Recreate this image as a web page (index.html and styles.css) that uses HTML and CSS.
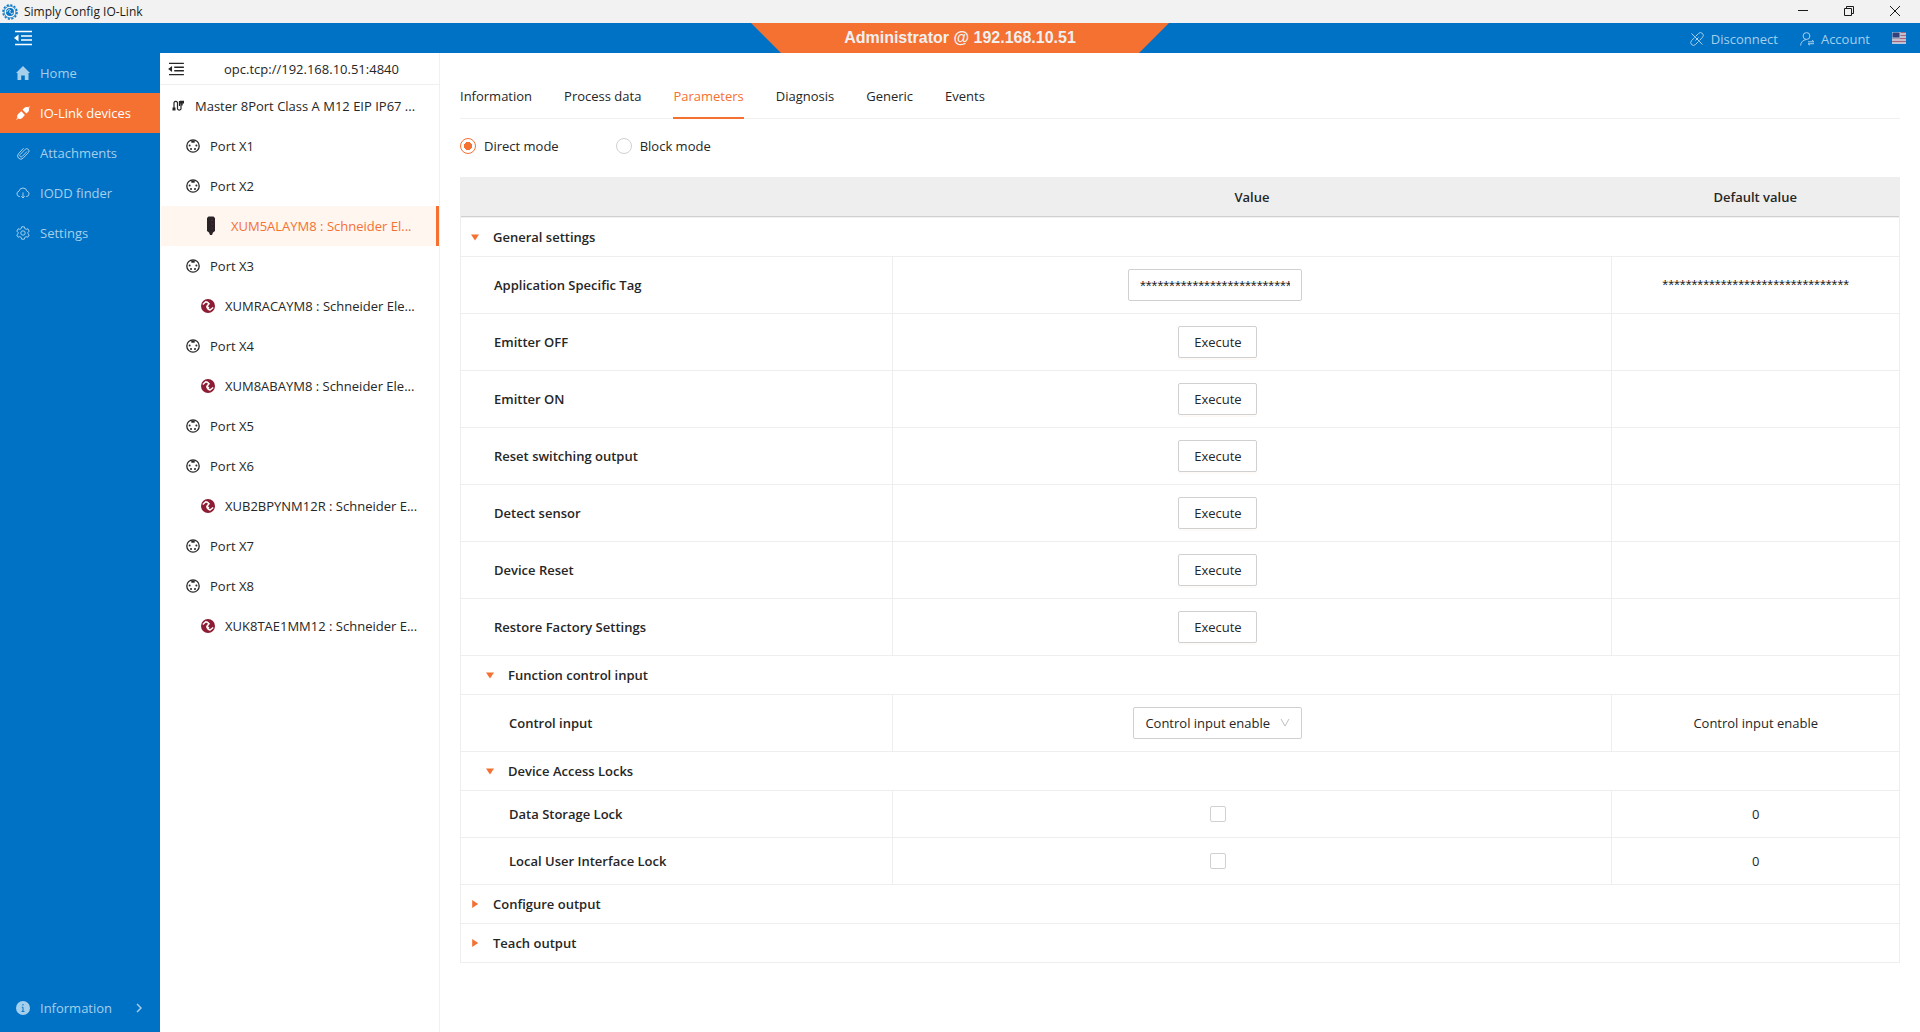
FILE: index.html
```html
<!DOCTYPE html>
<html lang="en">
<head>
<meta charset="UTF-8">
<meta name="viewport" content="width=device-width, initial-scale=1.0">
<title>Simply Config IO-Link</title>
<link rel="stylesheet" href="styles.css">
</head>
<body>

<!-- shared icons -->
<svg class="sprite" aria-hidden="true">
  <symbol id="fold" viewBox="0 0 18 16">
    <path d="M1 1.500h17M7 6h11M7 10h11M1 14.500h17" stroke="currentColor" stroke-width="1.500" fill="none"/>
    <path d="M0 8l4.500-3.500v7z" fill="currentColor"/>
  </symbol>
  <symbol id="port" viewBox="0 0 14 14">
    <circle cx="7" cy="7" r="6.200" fill="none" stroke="currentColor" stroke-width="1.300"/>
    <path d="M5.300 1.500h3.400v2.200H5.300z" fill="currentColor"/>
    <g fill="currentColor"><circle cx="3.600" cy="6.500" r="1"/><circle cx="10.400" cy="6.500" r="1"/><circle cx="5" cy="10" r="1"/><circle cx="9" cy="10" r="1"/></g>
  </symbol>
  <symbol id="iolink" viewBox="0 0 14 14">
    <circle cx="7" cy="7" r="7" fill="#8c1d32"/>
    <path d="M1.800 5.500L4.800 2.800Q6.500 2.800 8 4.800L6 7.200 8 9.200" fill="none" stroke="#fff" stroke-width="1.500"/>
    <path d="M5.800 7.500Q6.500 10.500 9 11L12.200 8.500" fill="none" stroke="#fff" stroke-width="1.500"/>
  </symbol>
</svg>

<div class="titlebar">
  <svg class="app-icon" viewBox="0 0 16 16">
    <circle cx="8" cy="8" r="7" fill="none" stroke="#0a76c4" stroke-width="1.600" stroke-dasharray="2.200 1.466"/>
    <circle cx="8" cy="8" r="5.900" fill="none" stroke="#0a76c4" stroke-width=".8"/>
    <circle cx="8" cy="8" r="4" fill="#0a76c4"/>
    <path d="M5 8c0-2 2-3 3.500-1.500L7.500 8l1.500 1.500C10 10.500 11 9.500 11 8.500" fill="none" stroke="#fff" stroke-width=".9"/>
  </svg>
  <span class="app-title">Simply Config IO-Link</span>
  <div class="window-buttons">
    <button aria-label="Minimize"><svg viewBox="0 0 10 10"><path d="M0 4.500h10"/></svg></button>
    <button aria-label="Restore"><svg viewBox="0 0 10 10"><path d="M.5 2.500h7v7h-7zM2.500 2V.5h7v7H8"/></svg></button>
    <button aria-label="Close"><svg viewBox="0 0 10 10"><path d="M0 0l10 10M10 0L0 10"/></svg></button>
  </div>
</div>

<header class="topbar">
  <button class="fold-button" aria-label="Collapse menu"><svg><use href="#fold"/></svg></button>
  <div class="banner">Administrator @ 192.168.10.51</div>
  <div class="user-links">
    <a href="#">
      <svg viewBox="0 0 14 14"><path d="M5.500 4.500l3-3a2.600 2.600 0 0 1 4 3.800L9.500 8.500M8.500 9.500l-3 3a2.600 2.600 0 0 1-4-3.800L4.500 5.500M1.500 1.500l11 11M5.500 8.500l3-3"/></svg>
      Disconnect
    </a>
    <a href="#">
      <svg viewBox="0 0 14 14"><circle cx="6.500" cy="4" r="3.400"/><path d="M.6 13.500c.2-3.400 2.500-5.600 5.900-6M8 9.800h6l-2-1.600M14 11.700H8l2 1.600"/></svg>
      Account
    </a>
    <button class="flag" aria-label="Language">
      <svg viewBox="0 0 14 12">
        <path fill="#c9bccb" d="M0 0h14v12H0z"/>
        <path d="M0 .5h14M0 3.500h14M0 6.500h14M0 9.500h14" stroke="#a4657a"/>
        <path fill="#35407a" d="M0 0h8v6H0z"/>
      </svg>
    </button>
  </div>
</header>

<div class="layout">
  <nav class="sidebar">
    <a href="#"><svg viewBox="0 0 14 14"><path class="solid" d="M7 0l7 7h-1.500v7H8.800V9.500H5.200V14H1.500V7H0z"/></svg>Home</a>
    <a href="#" class="active"><svg viewBox="0 0 14 14"><path class="solid" d="M6.500 3.800l1.700-1.700c1.200-1.200 2.800-1.200 3.900-.6L13.300.3l.6.600-1.200 1.200c.6 1.100.5 2.700-.6 3.800L10.300 7.600zM5.300 5.300l3.600 3.600-2.700 3c-1.200 1.200-2.900 1.200-4 .6L.8 13.800l-.6-.6 1.300-1.300c-.6-1.200-.5-2.800.6-3.900z"/></svg>IO-Link devices</a>
    <a href="#"><svg viewBox="0 0 14 14"><path d="M11 5.500l-4.800 5a1.400 1.400 0 0 1-2-2l5-5.200a2.300 2.300 0 0 1 3.200 3.300l-5.200 5.500a3.200 3.200 0 0 1-4.700-4.400L7.500 2.300"/></svg>Attachments</a>
    <a href="#"><svg viewBox="0 0 14 14"><path d="M4 10.500H3.300a2.700 2.700 0 0 1-.3-5.300 4.100 4.100 0 0 1 8 0 2.700 2.700 0 0 1-.3 5.300H10M7 6.500v5.500M5.300 10.300L7 12l1.700-1.700"/></svg>IODD finder</a>
    <a href="#"><svg viewBox="0 0 14 14"><path d="M5.700.8h2.600l.5 1.800 1.300.7 1.800-.5 1.300 2.300L11.900 6.400v1.300l1.300 1.200-1.300 2.300-1.800-.5-1.300.7-.5 1.800H5.700l-.5-1.800-1.300-.7-1.800.5L.8 8.900l1.300-1.200V6.400L.8 5.100l1.300-2.300 1.800.5 1.300-.7z"/><circle cx="7" cy="7" r="2.200"/></svg>Settings</a>
    <a href="#" class="info"><svg viewBox="0 0 14 14"><circle class="solid" cx="7" cy="7" r="7"/><path class="cut" d="M7 3v1.500M5.800 6.200H7v4M5.500 10.400h3"/></svg>Information<svg class="arrow" viewBox="0 0 6 10"><path d="M1 1l4 4-4 4"/></svg></a>
  </nav>

  <aside class="tree">
    <div class="tree-header">
      <button aria-label="Collapse tree"><svg><use href="#fold"/></svg></button>
      <span>opc.tcp://192.168.10.51:4840</span>
    </div>
    <ul>
      <li><a href="#" class="master"><svg viewBox="0 0 12 12"><path d="M2 8V2.500a2 2 0 0 1 3.500 0V9a2 2 0 0 0 3.500 0V3M7.500 1v5" fill="none" stroke="currentColor" stroke-width="1.200"/><path d="M.5 7.500h3v3h-3zM8 .8h4v2.800H8zM9.200 3h1.500v2.500H9.200z" fill="currentColor"/></svg>Master 8Port Class A M12 EIP IP67 ...</a></li>
      <li><a href="#" class="port"><svg><use href="#port"/></svg>Port X1</a></li>
      <li><a href="#" class="port"><svg><use href="#port"/></svg>Port X2</a></li>
      <li><a href="#" class="device selected"><svg viewBox="0 0 10 20"><path d="M1 2l1.500-1.500h5L9 2v13l-2 1.500L6 19H4l-1-2.500L1 15z" fill="#2a2428"/><path d="M5.500 4.500h1M5.500 8h1M5.500 12h1" stroke="#9c2030"/></svg>XUM5ALAYM8 : Schneider El...</a></li>
      <li><a href="#" class="port"><svg><use href="#port"/></svg>Port X3</a></li>
      <li><a href="#" class="device"><svg><use href="#iolink"/></svg>XUMRACAYM8 : Schneider Ele...</a></li>
      <li><a href="#" class="port"><svg><use href="#port"/></svg>Port X4</a></li>
      <li><a href="#" class="device"><svg><use href="#iolink"/></svg>XUM8ABAYM8 : Schneider Ele...</a></li>
      <li><a href="#" class="port"><svg><use href="#port"/></svg>Port X5</a></li>
      <li><a href="#" class="port"><svg><use href="#port"/></svg>Port X6</a></li>
      <li><a href="#" class="device"><svg><use href="#iolink"/></svg>XUB2BPYNM12R : Schneider E...</a></li>
      <li><a href="#" class="port"><svg><use href="#port"/></svg>Port X7</a></li>
      <li><a href="#" class="port"><svg><use href="#port"/></svg>Port X8</a></li>
      <li><a href="#" class="device"><svg><use href="#iolink"/></svg>XUK8TAE1MM12 : Schneider E...</a></li>
    </ul>
  </aside>

  <main class="content">
    <nav class="tabs">
      <a href="#">Information</a>
      <a href="#">Process data</a>
      <a href="#" class="active">Parameters</a>
      <a href="#">Diagnosis</a>
      <a href="#">Generic</a>
      <a href="#">Events</a>
    </nav>

    <div class="modes">
      <label><input type="radio" name="mode" checked>Direct mode</label>
      <label><input type="radio" name="mode">Block mode</label>
    </div>

    <table class="params">
      <colgroup><col class="col-name"><col class="col-value"><col class="col-default"></colgroup>
      <thead>
        <tr><th></th><th>Value</th><th>Default value</th></tr>
      </thead>
      <tbody>
        <tr class="group"><td colspan="3"><button class="open">General settings</button></td></tr>
        <tr><td><label for="tag">Application Specific Tag</label></td><td><input type="text" id="tag" value="********************************"></td><td class="stars">********************************</td></tr>
        <tr><td>Emitter OFF</td><td><button>Execute</button></td><td></td></tr>
        <tr><td>Emitter ON</td><td><button>Execute</button></td><td></td></tr>
        <tr><td>Reset switching output</td><td><button>Execute</button></td><td></td></tr>
        <tr><td>Detect sensor</td><td><button>Execute</button></td><td></td></tr>
        <tr><td>Device Reset</td><td><button>Execute</button></td><td></td></tr>
        <tr><td>Restore Factory Settings</td><td><button>Execute</button></td><td></td></tr>
        <tr class="group nested"><td colspan="3"><button class="open">Function control input</button></td></tr>
        <tr class="nested"><td><label for="control">Control input</label></td><td>
          <span class="select">
            <select id="control"><option>Control input enable</option></select>
            <svg viewBox="0 0 10 10"><path d="M1 1l4 7 4-7"/></svg>
          </span>
        </td><td>Control input enable</td></tr>
        <tr class="group nested"><td colspan="3"><button class="open">Device Access Locks</button></td></tr>
        <tr class="nested lock"><td><label for="storage">Data Storage Lock</label></td><td><input type="checkbox" id="storage"></td><td>0</td></tr>
        <tr class="nested lock"><td><label for="local">Local User Interface Lock</label></td><td><input type="checkbox" id="local"></td><td>0</td></tr>
        <tr class="group"><td colspan="3"><button>Configure output</button></td></tr>
        <tr class="group"><td colspan="3"><button>Teach output</button></td></tr>
      </tbody>
    </table>
  </main>
</div>

</body>
</html>
```
FILE: styles.css
```css
* {
  box-sizing: border-box;
}

body {
  margin: 0;
  min-height: 100vh;
  display: flex;
  flex-direction: column;
  font-family: "Open Sans", "Noto Sans", sans-serif;
  font-size: 13px;
  line-height: 20px;
  color: #262626;
  background-color: #fff;
}

a {
  color: inherit;
  text-decoration: none;
}

button {
  font: inherit;
  color: inherit;
  background: none;
  border: none;
  padding: 0;
  cursor: pointer;
}

svg {
  display: block;
  flex: none;
}

.sprite {
  display: none;
}

/* Window title bar */
.titlebar {
  display: flex;
  align-items: center;
  height: 23px;
  padding: 0 20px 0 2px;
  background-color: #f2f2f2;
}

.app-icon {
  width: 16px;
  height: 16px;
}

.app-title {
  margin-left: 6px;
  font-size: 12px;
  color: #1a1a1a;
}

.window-buttons {
  display: flex;
  gap: 36px;
  margin-left: auto;
  padding-bottom: 2px;
}

.window-buttons svg {
  width: 10px;
  height: 10px;
  fill: none;
  stroke: #1a1a1a;
}

/* Blue top bar */
.topbar {
  display: grid;
  grid-template-columns: 1fr 418px 1fr;
  align-items: center;
  height: 30px;
  background-color: #0072c6;
}

.fold-button {
  justify-self: start;
  margin-left: 14px;
  color: #fff;
}

.fold-button svg {
  width: 18px;
  height: 16px;
}

.banner {
  height: 30px;
  line-height: 30px;
  text-align: center;
  font-family: "Liberation Sans", Arial, sans-serif;
  font-size: 16px;
  font-weight: bold;
  color: #f0f0f0;
  background-color: #f57132;
  clip-path: polygon(0 0, 100% 0, calc(100% - 30px) 100%, 30px 100%);
}

.user-links {
  display: flex;
  justify-content: flex-end;
  align-items: center;
  gap: 22px;
  padding-right: 14px;
  color: #a6cfec;
}

.user-links a {
  display: flex;
  align-items: center;
  gap: 7px;
  padding-top: 2px;
}

.user-links svg {
  width: 14px;
  height: 14px;
  fill: none;
  stroke: currentColor;
}

.user-links .flag svg {
  height: 12px;
}

.layout {
  flex: 1;
  display: flex;
}

/* Main menu */
.sidebar {
  width: 160px;
  flex: none;
  display: flex;
  flex-direction: column;
  background-color: #0072c6;
  color: #a6cfec;
}

.sidebar a {
  display: flex;
  align-items: center;
  height: 40px;
  padding: 0 16px;
  gap: 10px;
}

.sidebar svg {
  width: 14px;
  height: 14px;
  fill: none;
  stroke: currentColor;
}

.sidebar .solid {
  fill: currentColor;
  stroke: none;
}

.sidebar .cut {
  stroke: #0072c6;
}

.sidebar .active {
  background-color: #f57132;
  color: #fff;
}

.sidebar .info {
  margin-top: auto;
  margin-bottom: 4px;
  padding-right: 18px;
}

.sidebar .arrow {
  width: 6px;
  height: 10px;
  margin-left: auto;
  stroke-width: 1.5;
}

/* Device tree */
.tree {
  width: 280px;
  flex: none;
  border-right: 1px solid #f0f0f0;
}

.tree-header {
  display: flex;
  align-items: center;
  height: 32px;
  padding-left: 8px;
  border-bottom: 1px solid #f0f0f0;
}

.tree-header svg {
  width: 16px;
  height: 14px;
}

.tree-header span {
  flex: 1;
  text-align: center;
}

.tree ul {
  list-style: none;
  margin: 0;
  padding: 1px 0 0 1px;
}

.tree li a {
  display: flex;
  align-items: center;
  gap: 10px;
  height: 40px;
  white-space: nowrap;
}

.tree li svg {
  width: 14px;
  height: 14px;
}

.tree .master {
  gap: 11px;
  padding-left: 11px;
}

.tree .master svg {
  width: 12px;
  height: 12px;
}

.tree .port {
  padding-left: 25px;
}

.tree .device {
  padding-left: 40px;
}

.tree .selected {
  gap: 15px;
  padding-left: 45px;
  color: #f57132;
  background-color: #fff6f0;
  border-right: 3px solid #f57132;
}

.tree .selected svg {
  width: 10px;
  height: 20px;
}

/* Device page */
.content {
  flex: 1;
  min-width: 0;
  padding: 20px;
}

.tabs {
  display: flex;
  gap: 32px;
  border-bottom: 1px solid #f0f0f0;
}

.tabs a {
  padding: 13px 0 11px;
  margin-bottom: -1px;
  border-bottom: 2px solid transparent;
}

.tabs .active {
  color: #f57132;
  font-weight: 500;
  border-bottom-color: #f57132;
}

.modes {
  display: flex;
  gap: 57px;
  margin: 17px 0 21px;
}

.modes label {
  display: flex;
  align-items: center;
  gap: 8px;
}

input[type="radio"],
input[type="checkbox"] {
  appearance: none;
  width: 16px;
  height: 16px;
  margin: 0;
  border: 1px solid #d0d0d0;
  background-color: #fff;
}

input[type="radio"] {
  border-radius: 50%;
}

input[type="radio"]:checked {
  border-color: #f57132;
  background-image: radial-gradient(circle, #f57132 4px, transparent 4px);
}

input[type="checkbox"] {
  display: block;
  margin: 0 auto;
  border-radius: 2px;
}

/* Parameter table */
.params {
  width: 100%;
  table-layout: fixed;
  border: 1px solid #eee;
  border-width: 0 1px;
  border-spacing: 0;
}

.col-name {
  width: 30%;
}

.col-value {
  width: 50%;
}

.col-default {
  width: 20%;
}

.params th {
  height: 41px;
  padding: 0;
  font-weight: 600;
  background-color: #eee;
  box-shadow: inset 0 -1px #d0d0d0;
  border-bottom: 1px solid #f0f0f0;
}

.params td {
  height: 57px;
  padding: 0;
  text-align: center;
  border-bottom: 1px solid #eee;
  border-left: 1px solid #eee;
}

.params td:first-child {
  padding-left: 33px;
  text-align: left;
  font-weight: 600;
  border-left: none;
}

.params .nested td:first-child {
  padding-left: 48px;
}

.params td:nth-child(2) {
  padding-right: 69px;
}

.params .lock td {
  height: 47px;
}

.params .group td {
  height: 39px;
  padding-left: 10px;
}

.params .group.nested td {
  padding-left: 25px;
}

.group button {
  display: flex;
  align-items: center;
  gap: 14px;
}

.group button::before {
  content: "";
  width: 8px;
  height: 8px;
  background-color: #f57132;
  clip-path: polygon(15% 0, 90% 50%, 15% 100%);
}

.group .open::before {
  clip-path: polygon(0 20%, 100% 20%, 50% 95%);
}

.params tr:not(.group) button,
.params input[type="text"],
.params select {
  height: 32px;
  border: 1px solid #d0d0d0;
  border-radius: 2px;
  background-color: #fff;
}

.params tr:not(.group) button {
  width: 79px;
  box-shadow: 0 2px #fdfaf8;
}

.stars,
.params input[type="text"] {
  font-family: "Liberation Sans", Arial, sans-serif;
  font-size: 15px;
  color: #262626;
}

.params input[type="text"] {
  width: 174px;
  margin-right: 6px;
  padding: 0 11px;
}

.select {
  position: relative;
  display: inline-block;
}

.select select {
  appearance: none;
  width: 169px;
  padding: 0 11px;
  font: inherit;
  color: inherit;
}

.select svg {
  position: absolute;
  top: 11px;
  right: 12px;
  width: 10px;
  height: 10px;
  fill: none;
  stroke: #c0c0c0;
  pointer-events: none;
}
```
